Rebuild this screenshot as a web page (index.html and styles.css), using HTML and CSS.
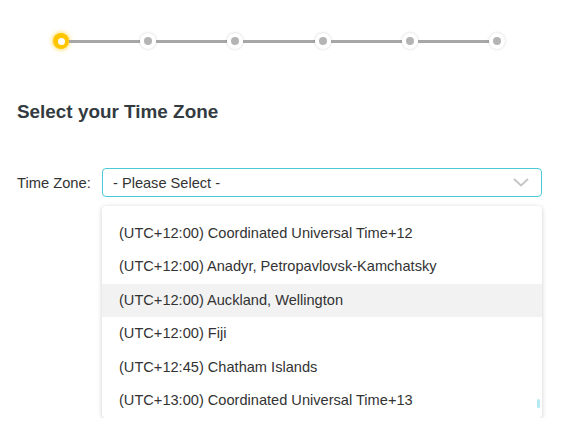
FILE: index.html
```html
<!DOCTYPE html>
<html>
<head>
<meta charset="utf-8">
<link rel="stylesheet" href="styles.css">
</head>
<body>
<div class="stepper">
  <span class="dot active"><span class="core"></span></span>
  <span class="line"></span>
  <span class="dot"><span class="core"></span></span>
  <span class="line"></span>
  <span class="dot"><span class="core"></span></span>
  <span class="line"></span>
  <span class="dot"><span class="core"></span></span>
  <span class="line"></span>
  <span class="dot"><span class="core"></span></span>
  <span class="line"></span>
  <span class="dot"><span class="core"></span></span>
</div>
<h2 class="title">Select your Time Zone</h2>
<div class="row">
  <span class="label">Time Zone:</span>
  <div class="select">
    <span>- Please Select -</span>
    <svg class="chev" width="16" height="9" viewBox="0 0 16 9"><polyline points="1,1 8,7.5 15,1" fill="none" stroke="#c6c6c6" stroke-width="2"/></svg>
  </div>
</div>
<div class="dropdown">
  <div class="item">(UTC+12:00) Coordinated Universal Time+12</div>
  <div class="item">(UTC+12:00) Anadyr, Petropavlovsk-Kamchatsky</div>
  <div class="item hover">(UTC+12:00) Auckland, Wellington</div>
  <div class="item">(UTC+12:00) Fiji</div>
  <div class="item">(UTC+12:45) Chatham Islands</div>
  <div class="item">(UTC+13:00) Coordinated Universal Time+13</div>
  <span class="thumb"></span>
</div>
</body>
</html>
```
FILE: styles.css
```css
body {
  margin: 0;
  font-family: "Liberation Sans", Arial, sans-serif;
  color: #333;
  background: #fff;
}
.stepper {
  display: flex;
  align-items: center;
  margin: 33px 0 0 53px;
  width: 452px;
  height: 16px;
}
.line {
  flex: 1;
  height: 3px;
  background: #a7a7a7;
}
.dot {
  width: 16px;
  height: 16px;
  border-radius: 50%;
  background: #fff;
  box-shadow: 0 0 3px rgba(0,0,0,0.18);
  display: flex;
  align-items: center;
  justify-content: center;
  flex: none;
}
.dot .core {
  width: 8px;
  height: 8px;
  border-radius: 50%;
  background: #b4b4b4;
}
.dot.active {
  background: #ffc600;
  box-shadow: 0 0 4px 1px rgba(255,200,0,0.6);
}
.dot.active .core {
  background: #fff;
  width: 7px;
  height: 7px;
}
.title {
  margin: 52px 0 0 17px;
  font-size: 18.9px;
  line-height: 22px;
  font-weight: bold;
  color: #333b41;
}
.row {
  display: flex;
  align-items: center;
  margin-top: 45px;
  padding-left: 17px;
}
.label {
  width: 85px;
  font-size: 14.7px;
  color: #333;
}
.select {
  box-sizing: border-box;
  width: 440px;
  height: 29px;
  border: 1px solid #4ccbd7;
  border-radius: 4px;
  display: flex;
  align-items: center;
  justify-content: space-between;
  padding: 0 12px 0 10px;
  font-size: 14.6px;
  color: #333;
}
.chev {
  display: block;
}
.dropdown {
  position: relative;
  box-sizing: border-box;
  margin: 9px 0 0 102px;
  width: 440px;
  height: 212px;
  padding-top: 10.5px;
  border-radius: 4px;
  background: #fff;
  box-shadow: 0 1px 5px rgba(0,0,0,0.2);
}
.item {
  height: 33.6px;
  line-height: 33.6px;
  padding-left: 17px;
  font-size: 14.6px;
  color: #333;
}
.item.hover {
  background: #f2f2f2;
}
.thumb {
  position: absolute;
  right: 2px;
  bottom: 10px;
  width: 3px;
  height: 9px;
  border-radius: 2px;
  background: #b3e9ef;
}
```
